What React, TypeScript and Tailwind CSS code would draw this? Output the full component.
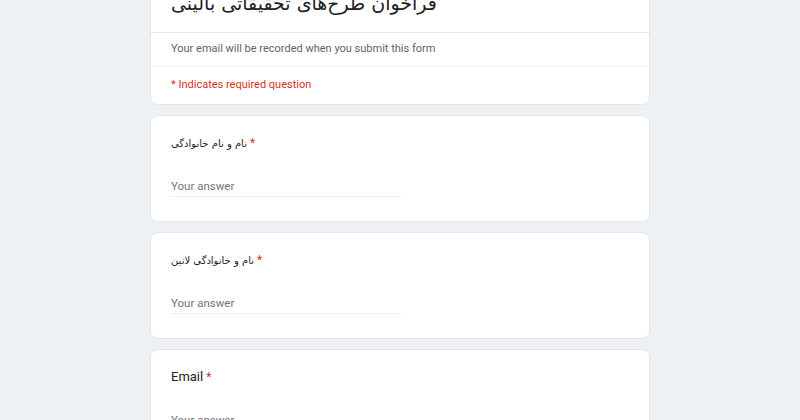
import React from "react";

interface QuestionProps {
  label: string;
  persian?: boolean;
}

const Question: React.FC<QuestionProps> = ({ label, persian = false }) => {
  return (
    <div className="bg-white rounded-lg border border-[#e3e6ea] h-[107px] px-5 pt-[17px]">
      <div
        className={
          persian
            ? "h-[20px] text-[10px] text-[#202124] font-['DejaVu_Sans',sans-serif] leading-[20px]"
            : "h-[20px] text-[13px] text-[#202124] font-['Roboto',sans-serif] leading-[20px]"
        }
      >
        <span>{label}</span>
        <span className="text-[#d93025] text-[12px] font-['Roboto',sans-serif]"> *</span>
      </div>
      <div className="mt-[25px] w-[230px] border-b border-[#eceef0] pb-[2px] text-[11.5px] text-[#70757a] font-['Roboto',sans-serif] leading-[16px]">
        Your answer
      </div>
    </div>
  );
};

export default function App() {
  return (
    <div className="w-[800px] h-[420px] overflow-hidden bg-[#eef1f4]">
      <div className="w-[500px] mx-auto -mt-[29px] flex flex-col gap-[10px]">
        <div className="bg-white rounded-lg border border-[#e3e6ea]">
          <div className="h-[60px] px-5 flex items-end pb-[16px]">
            <div className="text-[19px] leading-[26px] text-[#202124] font-['DejaVu_Sans',sans-serif]">
              فراخوان طرح‌های تحقیقاتی بالینی
            </div>
          </div>
          <div className="border-t border-[#e3e6ea] h-[34px] px-5 flex items-center text-[11px] text-[#5f6368] font-['Roboto',sans-serif]">
            Your email will be recorded when you submit this form
          </div>
          <div className="border-t border-[#eceef0] h-[38px] px-5 flex items-center text-[11px] text-[#d93025] font-['Roboto',sans-serif]">
            * Indicates required question
          </div>
        </div>
        <Question label="نام و نام خانوادگی" persian />
        <Question label="نام و  خانوادگی لاتین" persian />
        <Question label="Email" />
      </div>
    </div>
  );
}
